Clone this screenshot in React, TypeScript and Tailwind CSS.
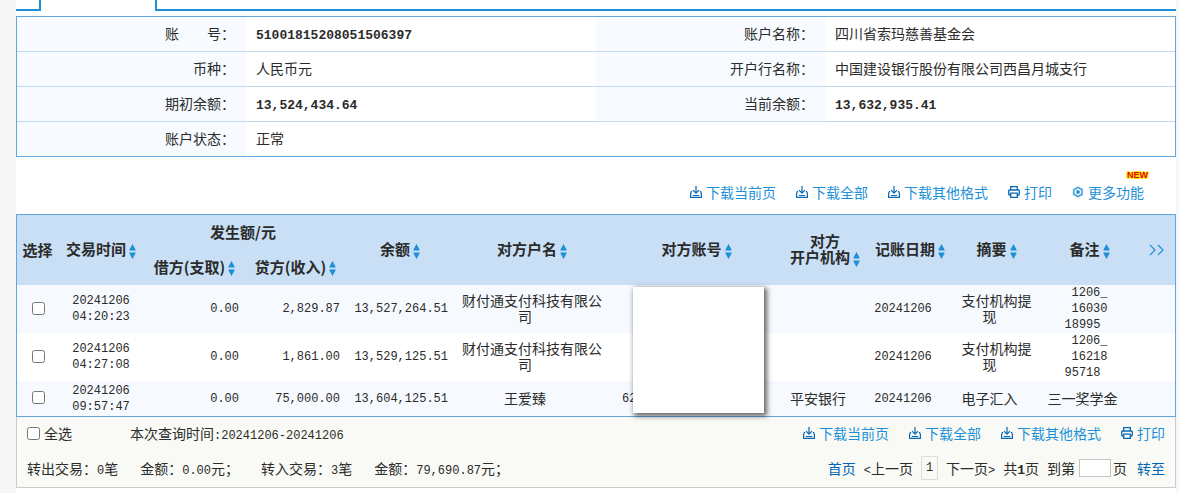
import { ReactNode } from "react";
import clsx from "clsx";

type Transaction = {
  date: string;
  time: string;
  debit: string;
  credit: string;
  balance: string;
  name: string[];
  account: string;
  bank: string;
  bookDate: string;
  summary: string[];
  remark: string[];
};

const transactions: Transaction[] = [
  {
    date: "20241206",
    time: "04:20:23",
    debit: "0.00",
    credit: "2,829.87",
    balance: "13,527,264.51",
    name: ["财付通支付科技有限公", "司"],
    account: "",
    bank: "",
    bookDate: "20241206",
    summary: ["支付机构提", "现"],
    remark: ["1206_", "16030", "18995"],
  },
  {
    date: "20241206",
    time: "04:27:08",
    debit: "0.00",
    credit: "1,861.00",
    balance: "13,529,125.51",
    name: ["财付通支付科技有限公", "司"],
    account: "",
    bank: "",
    bookDate: "20241206",
    summary: ["支付机构提", "现"],
    remark: ["1206_", "16218", "95718"],
  },
  {
    date: "20241206",
    time: "09:57:47",
    debit: "0.00",
    credit: "75,000.00",
    balance: "13,604,125.51",
    name: ["王爱臻"],
    account: "62",
    bank: "平安银行",
    bookDate: "20241206",
    summary: ["电子汇入"],
    remark: ["三一奖学金"],
  },
];

const columns = [
  "w-[41px]",
  "w-[86px]",
  "w-[101px]",
  "w-[101px]",
  "w-[108px]",
  "w-[156px]",
  "w-[173px]",
  "w-[84px]",
  "w-[86px]",
  "w-[87px]",
  "w-[99px]",
  "w-[36px]",
];

const Num = ({ children }: { children: ReactNode }) => (
  <span className="font-['Liberation_Mono',monospace] text-xs leading-none">
    {children}
  </span>
);

const BigNum = ({ children }: { children: ReactNode }) => (
  <span className="font-['Liberation_Mono',monospace] text-[13px] leading-none font-bold">
    {children}
  </span>
);

const DownloadIcon = () => (
  <svg width="12" height="12" viewBox="0 0 12 12" fill="none" stroke="#0b68b4">
    <path d="M6 0v7M3 4.2 6 7.2 9 4.2" strokeWidth="1.2" />
    <path d="M2.2 5.5H1.4L.6 7.4v4h10.8v-4l-.8-1.9h-.8" strokeWidth="1.2" />
    <path d="M2.8 9.5h6.4" />
  </svg>
);

const PrintIcon = () => (
  <svg width="12" height="12" viewBox="0 0 12 12" fill="none" stroke="#0b68b4" strokeWidth="1.3">
    <path d="M2.7 4V.7h6.6V4" />
    <path d="M2.7 9H1.4L.7 8.3V4.7L1.4 4h9.2l.7.7v3.6l-.7.7H9.3" />
    <path d="M2.7 7.2h6.6v4.1H2.7z" />
  </svg>
);

const MoreIcon = () => (
  <svg width="12" height="12" viewBox="0 0 12 12" fill="none">
    <path d="M6 0l5.4 3v6L6 12 .6 9V3z" fill="#a9d2ee" />
    <path d="M6 1.6 9.9 3.8v4.4L6 10.4 2.1 8.2V3.8z" fill="#fff" stroke="#4fa6dc" strokeWidth="1.5" />
    <circle cx="6" cy="6" r="1.9" fill="#2a90d3" />
  </svg>
);

const SortIcon = () => (
  <svg
    className="ml-[3px] inline-block align-middle"
    width="7"
    height="15"
    viewBox="0 0 7 15"
    fill="#1e90d8"
  >
    <path d="M3.5 0 6.5 5.5V6.5H.5V5.5zM.5 8.5h6v1L3.5 15 .5 9.5z" />
  </svg>
);

const ToolLink = ({ icon, children }: { icon: ReactNode; children: ReactNode }) => (
  <a href="#" className="relative flex items-center gap-1 text-[#1e90d8]">
    {icon}
    {children}
  </a>
);

const DownloadLinks = () => (
  <>
    <ToolLink icon={<DownloadIcon />}>下载当前页</ToolLink>
    <ToolLink icon={<DownloadIcon />}>下载全部</ToolLink>
    <ToolLink icon={<DownloadIcon />}>下载其他格式</ToolLink>
    <ToolLink icon={<PrintIcon />}>打印</ToolLink>
  </>
);

const Label = ({ children }: { children: ReactNode }) => (
  <th scope="row" className="bg-[#f7fbff] pr-[11px] pb-[2px] text-right font-normal">
    {children}
  </th>
);

const Value = ({ children, span }: { children: ReactNode; span?: number }) => (
  <td colSpan={span} className="pb-[2px] pl-[10px]">
    {children}
  </td>
);

const AccountInfo = () => (
  <div className="border border-[#62a6e0]">
    <table className="w-full table-fixed border-separate border-spacing-0">
      <colgroup>
        <col className="w-[229px]" />
        <col className="w-[350px]" />
        <col className="w-[229px]" />
        <col className="w-[350px]" />
      </colgroup>
      <tbody className="[&>tr]:h-[35px] [&>tr:last-child]:h-[34px] [&>tr:not(:last-child)>*]:border-b [&>tr>*]:border-[#c5d8ea]">
        <tr>
          <Label>账　　号：</Label>
          <Value>
            <BigNum>51001815208051506397</BigNum>
          </Value>
          <Label>账户名称：</Label>
          <Value>四川省索玛慈善基金会</Value>
        </tr>
        <tr>
          <Label>币种：</Label>
          <Value>人民币元</Value>
          <Label>开户行名称：</Label>
          <Value>中国建设银行股份有限公司西昌月城支行</Value>
        </tr>
        <tr>
          <Label>期初余额：</Label>
          <Value>
            <BigNum>13,524,434.64</BigNum>
          </Value>
          <Label>当前余额：</Label>
          <Value>
            <BigNum>13,632,935.41</BigNum>
          </Value>
        </tr>
        <tr>
          <Label>账户状态：</Label>
          <Value span={3}>正常</Value>
        </tr>
      </tbody>
    </table>
  </div>
);

const SortHead = ({ children, rows }: { children: ReactNode; rows?: number }) => (
  <th scope="col" rowSpan={rows} className="whitespace-nowrap">
    {children}
    <SortIcon />
  </th>
);

// Stacked lines of one cell, "trail" leaves room for two spaces after the last one
const Lines = ({
  lines,
  mono,
  trail = true,
}: {
  lines: string[];
  mono?: boolean;
  trail?: boolean;
}) => (
  <>
    {lines.map((line, i) => (
      <div
        key={i}
        className={clsx(
          "whitespace-nowrap",
          mono && "font-['Liberation_Mono',monospace] text-xs leading-4",
          trail && i === lines.length - 1 && "pr-[14px]"
        )}
      >
        {line}
      </div>
    ))}
  </>
);

const TransactionTable = () => (
  <div className="border border-[#62a6e0]">
    <table className="w-full table-fixed border-collapse text-center leading-4">
      <colgroup>
        {columns.map((width, index) => (
          <col key={index} className={width} />
        ))}
      </colgroup>
      <thead className="bg-[#c8dff5] text-[15px] font-bold">
        <tr className="h-[35px]">
          <th scope="col" rowSpan={2} className="whitespace-nowrap">
            选择
          </th>
          <SortHead rows={2}>交易时间</SortHead>
          <th scope="colgroup" colSpan={2} className="pr-1 pb-[2px]">
            发生额/元
          </th>
          <SortHead rows={2}>余额</SortHead>
          <SortHead rows={2}>对方户名</SortHead>
          <SortHead rows={2}>对方账号</SortHead>
          <SortHead rows={2}>
            对方
            <br />
            开户机构
          </SortHead>
          <SortHead rows={2}>记账日期</SortHead>
          <SortHead rows={2}>摘要</SortHead>
          <SortHead rows={2}>备注</SortHead>
          <th scope="col" rowSpan={2}>
            <button type="button" aria-label="更多列" className="mb-[2px] align-middle">
              <svg width="16" height="12" viewBox="0 0 16 12" fill="none" stroke="#2a90d8" strokeWidth="1.2">
                <path d="M1 1l5 5-5 5M9 1l5 5-5 5" />
              </svg>
            </button>
          </th>
        </tr>
        <tr className="h-[35px]">
          <SortHead>借方(支取)</SortHead>
          <SortHead>贷方(收入)</SortHead>
        </tr>
      </thead>
      <tbody>
        {transactions.map((item, index) => (
          <tr key={item.time} className="h-[35px] odd:bg-[#f6fafe]">
            <td className="pb-[2px] pl-[2px]">
              <input
                type="checkbox"
                aria-label={`选择 ${item.time}`}
                className="mx-auto block size-[13px]"
              />
            </td>
            <td>
              <Lines lines={[item.date, item.time]} mono trail={false} />
            </td>
            <td className="pr-[6px] text-right">
              <Lines lines={[item.debit]} mono trail={false} />
            </td>
            <td className="pr-[6px] text-right">
              <Lines lines={[item.credit]} mono trail={false} />
            </td>
            <td className="pr-[6px] text-right">
              <Lines lines={[item.balance]} mono trail={false} />
            </td>
            <td className="pb-[2px]">
              <Lines lines={item.name} />
            </td>
            <td className="relative pl-3 text-left">
              <Lines lines={[item.account]} mono trail={false} />
              {index === 0 && (
                <div className="absolute top-[2px] left-[23px] z-10 h-[126px] w-[131px] bg-white shadow-[2px_2px_5px_1px_rgba(0,0,0,0.6)]" />
              )}
            </td>
            <td className="pb-[2px]">
              <Lines lines={[item.bank]} />
            </td>
            <td>
              <Lines lines={[item.bookDate]} mono />
            </td>
            <td className="pb-[2px]">
              <Lines lines={item.summary} />
            </td>
            <td className={clsx(item.remark.length === 1 && "pb-[2px]")}>
              <Lines lines={item.remark} mono={item.remark.length > 1} />
            </td>
            <td />
          </tr>
        ))}
      </tbody>
    </table>
  </div>
);

const Footer = () => (
  <div className="border border-t-0 border-[#ccc] bg-[#f9faf5] px-[10px]">
    <div className="flex h-[35px] items-center justify-between pb-[3px]">
      <div className="flex items-center">
        <label className="flex items-center gap-1">
          <input type="checkbox" className="size-[13px]" />
          全选
        </label>
        <span className="ml-[58px]">
          本次查询时间<Num>:20241206-20241206</Num>
        </span>
      </div>
      <div className="flex gap-5">
        <DownloadLinks />
      </div>
    </div>
    <div className="flex h-[35px] items-center justify-between pb-[3px]">
      <div className="flex gap-[22px]">
        <span>
          转出交易：<Num>0</Num>笔
        </span>
        <span>
          金额：<Num>0.00</Num>元；
        </span>
        <span>
          转入交易：<Num>3</Num>笔
        </span>
        <span>
          金额：<Num>79,690.87</Num>元；
        </span>
      </div>
      <div className="flex items-center gap-2">
        <a href="#" className="text-[#0066b3]">
          首页
        </a>
        <a href="#">
          <Num>&lt;</Num>上一页
        </a>
        <span className="flex h-6 w-[17px] items-center justify-center border border-[#ddd]">
          <Num>1</Num>
        </span>
        <a href="#">
          下一页<Num>&gt;</Num>
        </a>
        <span>
          共<BigNum>1</BigNum>页
        </span>
        <label className="flex items-center">
          到第
          <input
            type="text"
            className="mr-[2px] ml-1 h-[18px] w-8 border border-[#c4c4c4] bg-white text-xs"
          />
          页
        </label>
        <a href="#" className="ml-[2px] text-[#0066b3]">
          转至
        </a>
      </div>
    </div>
  </div>
);

const App = () => {
  return (
    <div className="min-h-screen bg-[#f6f6f6] pr-[3px] pl-4 font-['Noto_Sans_CJK_SC',sans-serif] text-sm text-[#2b2b2b]">
      <div className="min-h-screen bg-white">
        {/* Tabs */}
        <div className="mb-[5px] flex h-[11px] justify-between">
          <div className="w-[25px] border-r-2 border-b-2 border-[#1e90d8]" />
          <div className="ml-[114px] grow border-b-2 border-l-2 border-[#1e90d8]" />
        </div>

        <AccountInfo />

        {/* Toolbar */}
        <div className="flex justify-end gap-5 pt-[21px] pr-8 pb-2 leading-7">
          <DownloadLinks />
          <ToolLink icon={<MoreIcon />}>
            更多功能
            <span className="absolute -top-2 -right-1 font-['Liberation_Sans',sans-serif] text-[9px] leading-[10px] font-bold text-red-600 [text-shadow:1px_0_#ffe600,-1px_0_#ffe600,0_1px_#ffe600,0_-1px_#ffe600,1px_1px_#ffe600]">
              NEW
            </span>
          </ToolLink>
        </div>

        <TransactionTable />
        <Footer />
      </div>
    </div>
  );
};

export default App;
